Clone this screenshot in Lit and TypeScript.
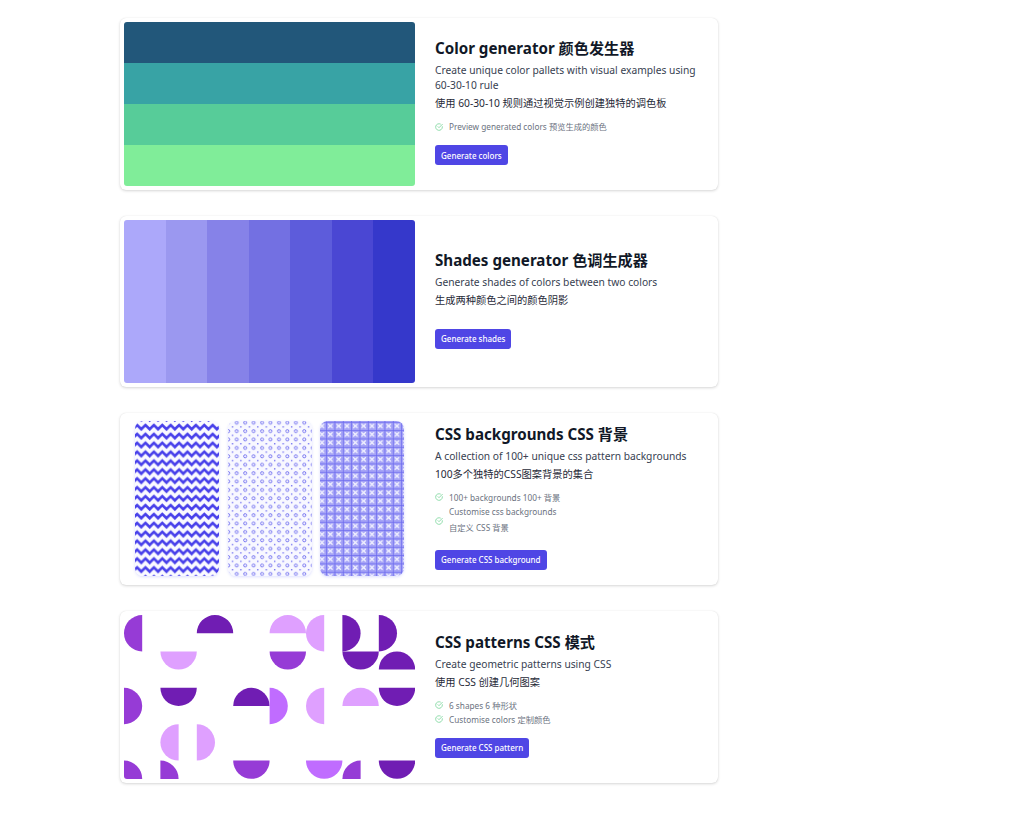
import { LitElement, html, css, svg } from 'lit';
import { customElement } from 'lit/decorators.js';

type Half = [col: number, row: number, side: 'l' | 'r' | 't' | 'b', color: string];

const DARK = '#701db3';
const MID = '#963bd6';
const BRIGHT = '#c06cff';
const LIGHT = '#dfa0ff';

const HALVES: Half[] = [
  [0, 0, 'l', MID], [2, 0, 't', DARK], [4, 0, 't', LIGHT], [5, 0, 'l', LIGHT], [6, 0, 'r', DARK], [7, 0, 'r', DARK],
  [1, 1, 'b', LIGHT], [4, 1, 'b', MID], [6, 1, 'b', DARK], [7, 1, 't', DARK],
  [0, 2, 'r', MID], [1, 2, 'b', DARK], [3, 2, 't', DARK], [4, 2, 'r', BRIGHT], [5, 2, 'l', LIGHT], [6, 2, 't', LIGHT], [7, 2, 'b', DARK],
  [1, 3, 'l', LIGHT], [2, 3, 'r', LIGHT],
  [0, 4, 'r', MID], [1, 4, 'r', MID], [3, 4, 'b', MID], [5, 4, 'b', BRIGHT], [6, 4, 'l', MID], [7, 4, 'b', DARK],
];

const CELL = 36.4;

function halfPath([col, row, side]: Half) {
  const x = col * CELL;
  const y = row * CELL;
  const r = CELL / 2;
  switch (side) {
    case 'l': return `M${x + r} ${y}A${r} ${r} 0 0 0 ${x + r} ${y + CELL}Z`;
    case 'r': return `M${x} ${y}A${r} ${r} 0 0 1 ${x} ${y + CELL}Z`;
    case 't': return `M${x} ${y + r}A${r} ${r} 0 0 1 ${x + CELL} ${y + r}Z`;
    default: return `M${x} ${y}A${r} ${r} 0 0 0 ${x + CELL} ${y}Z`;
  }
}

const check = html`<svg class="check" viewBox="0 0 24 24" fill="none" stroke="#7fd89f" stroke-width="2.6" stroke-linecap="round" stroke-linejoin="round">
  <path d="M22 11.1V12a10 10 0 1 1-5.9-9.1"></path>
  <path d="M22 4 12 14l-3-3"></path>
</svg>`;

@customElement('app-root')
export class AppRoot extends LitElement {
  static styles = css`
    :host {
      display: block;
      font-family: "Noto Sans", "Noto Sans CJK SC", sans-serif;
      background: #fff;
      min-height: 827px;
      color: #1f2937;
    }

    .list {
      width: 598px;
      margin-left: 120px;
      padding-top: 18px;
      display: flex;
      flex-direction: column;
      gap: 26px;
    }

    .card {
      display: grid;
      grid-template-columns: 291px 1fr;
      column-gap: 20px;
      height: 172px;
      box-sizing: border-box;
      padding: 4px;
      background: #fff;
      border-radius: 6px;
      box-shadow: 0 1px 3px rgba(0, 0, 0, 0.16), 0 0 1px rgba(0, 0, 0, 0.1);
    }

    .card.short {
      height: 171px;
    }

    .media {
      height: 164px;
      border-radius: 3px;
      overflow: hidden;
    }

    .short .media {
      height: 163px;
    }

    .stack {
      display: flex;
      flex-direction: column;
    }

    .stack div {
      flex: 1;
    }

    .row {
      display: flex;
    }

    .row div {
      flex: 1;
    }

    .backgrounds {
      display: flex;
      align-items: flex-start;
      gap: 8.5px;
      overflow: visible;
      padding: 4px 0 0 11px;
      box-sizing: border-box;
    }

    .backgrounds svg {
      width: 84px;
      height: 155px;
      border-radius: 8px;
      display: block;
      box-shadow: 0 1px 3px rgba(68, 76, 247, 0.18);
    }

    .shapes {
      display: block;
      width: 291px;
      height: 164px;
    }

    .body {
      display: flex;
      flex-direction: column;
      justify-content: center;
      align-items: flex-start;
      padding: 0 16px 6px 0;
    }

    h2 {
      margin: 0 0 4px;
      font-size: 15.15px;
      line-height: 22px;
      font-weight: 700;
      color: #111827;
    }

    p {
      margin: 0;
      font-size: 10.25px;
      line-height: 15px;
      color: #374151;
    }

    p.zh {
      margin-top: 3px;
      color: #1f2937;
    }

    ul {
      list-style: none;
      margin: 9px 0 0;
      padding: 0;
      display: flex;
      flex-direction: column;
      gap: 1px;
    }

    li {
      display: flex;
      align-items: center;
      gap: 6px;
      font-size: 8.25px;
      line-height: 13px;
      color: #6b7280;
    }

    li span {
      display: block;
    }

    li .sub {
      margin: 3px 0 4px;
    }

    .check {
      width: 8px;
      height: 8px;
      flex: none;
    }

    button {
      margin-top: 12px;
      height: 20px;
      padding: 0 6px;
      border: 0;
      border-radius: 3px;
      background: #4f46e5;
      color: #fff;
      font: 500 8px "Noto Sans", sans-serif;
    }

    .gap-lg {
      margin-top: 21px;
    }
  `;

  private renderBackgrounds() {
    return html`<div class="media backgrounds">
      <svg viewBox="0 0 84 155">
        <defs>
          <pattern id="zig" width="8.4" height="8.9" patternUnits="userSpaceOnUse" y="2">
            <path d="M-2.1 6.2 2.1 2 6.3 6.2 10.5 2" fill="none" stroke="#4840ea" stroke-width="2.6"></path>
          </pattern>
        </defs>
        <rect width="84" height="155" fill="#fafaff"></rect>
        <rect width="84" height="155" fill="url(#zig)"></rect>
      </svg>
      <svg viewBox="0 0 84 155">
        <defs>
          <pattern id="dots" width="8.45" height="8.4" patternUnits="userSpaceOnUse" x="6.6" y="-0.4">
            <circle cx="2.1" cy="2.1" r="1.5" fill="none" stroke="#6a68ee" stroke-width="0.9"></circle>
            <rect x="5.6" y="5.6" width="1.4" height="1.4" fill="#7a78f2"></rect>
          </pattern>
        </defs>
        <rect width="84" height="155" fill="#f8f8ff"></rect>
        <rect width="84" height="155" fill="url(#dots)"></rect>
      </svg>
      <svg viewBox="0 0 84 155">
        <defs>
          <pattern id="cross" width="8.33" height="8.33" patternUnits="userSpaceOnUse" x="-2.17" y="0.83">
            <rect width="8.33" height="8.33" fill="#a5a3f6"></rect>
            <path d="M0 0H8.33M0 0V8.33" stroke="#6a68ee" stroke-width="1.4"></path>
            <path d="M2 2 6.33 6.33M6.33 2 2 6.33" stroke="#f4f4ff" stroke-width="1.3"></path>
          </pattern>
        </defs>
        <rect width="84" height="155" fill="url(#cross)"></rect>
      </svg>
    </div>`;
  }

  private renderShapes() {
    return html`<svg class="media shapes" viewBox="0 0 291 164">
      ${HALVES.map((h) => svg`<path d=${halfPath(h)} fill=${h[3]}></path>`)}
    </svg>`;
  }

  render() {
    return html`
      <div class="list">
        <section class="card">
          <div class="media stack">
            ${['#22577a', '#38a3a5', '#57cc99', '#80ed99'].map((c) => html`<div style="background:${c}"></div>`)}
          </div>
          <div class="body">
            <h2>Color generator 颜色发生器</h2>
            <p>Create unique color pallets with visual examples using 60-30-10 rule</p>
            <p class="zh">使用 60-30-10 规则通过视觉示例创建独特的调色板</p>
            <ul><li>${check}<span>Preview generated colors 预览生成的颜色</span></li></ul>
            <button>Generate colors</button>
          </div>
        </section>
        <section class="card short">
          <div class="media row">
            ${['#aca8fa', '#9b98f0', '#8682e8', '#7370e2', '#5d5cdb', '#4a47d3', '#3538cb'].map((c) => html`<div style="background:${c}"></div>`)}
          </div>
          <div class="body">
            <h2>Shades generator 色调生成器</h2>
            <p>Generate shades of colors between two colors</p>
            <p class="zh">生成两种颜色之间的颜色阴影</p>
            <button class="gap-lg">Generate shades</button>
          </div>
        </section>
        <section class="card">
          ${this.renderBackgrounds()}
          <div class="body">
            <h2>CSS backgrounds CSS 背景</h2>
            <p>A collection of 100+ unique css pattern backgrounds</p>
            <p class="zh">100多个独特的CSS图案背景的集合</p>
            <ul>
              <li>${check}<span>100+ backgrounds 100+ 背景</span></li>
              <li>${check}<div><span>Customise css backgrounds</span><span class="sub">自定义 CSS 背景</span></div></li>
            </ul>
            <button>Generate CSS background</button>
          </div>
        </section>
        <section class="card">
          ${this.renderShapes()}
          <div class="body">
            <h2>CSS patterns CSS 模式</h2>
            <p>Create geometric patterns using CSS</p>
            <p class="zh">使用 CSS 创建几何图案</p>
            <ul>
              <li>${check}<span>6 shapes 6 种形状</span></li>
              <li>${check}<span>Customise colors 定制颜色</span></li>
            </ul>
            <button>Generate CSS pattern</button>
          </div>
        </section>
      </div>
    `;
  }
}
